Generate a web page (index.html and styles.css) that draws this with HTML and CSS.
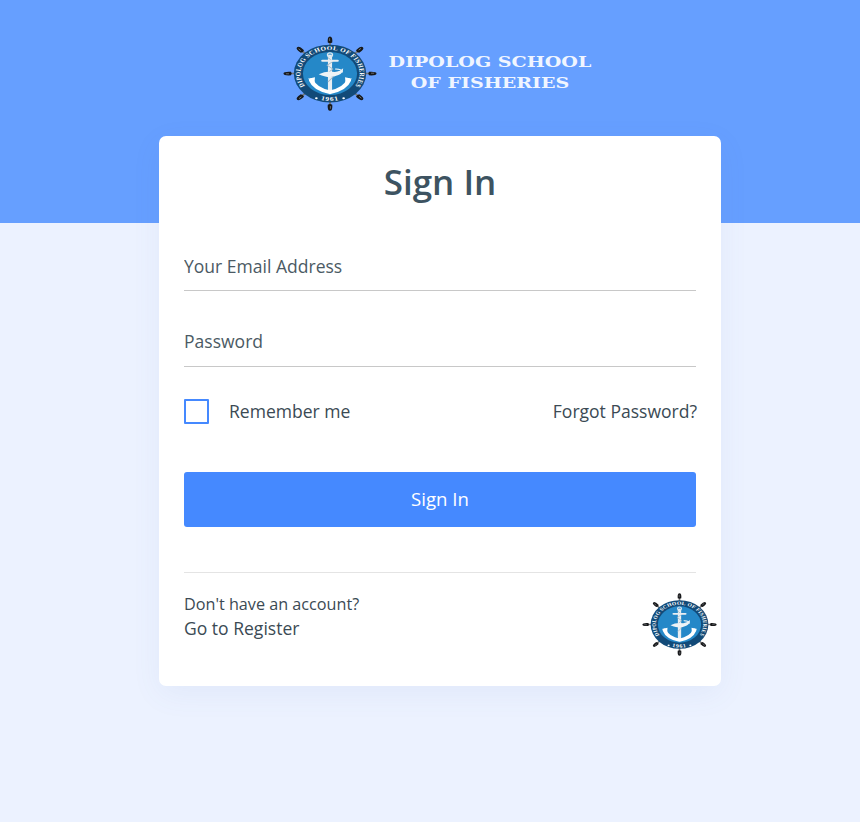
FILE: index.html
```html
<!DOCTYPE html>
<html lang="en">
<head>
<meta charset="utf-8">
<title>Sign In</title>
<link rel="stylesheet" href="styles.css">
</head>
<body>
<svg class="defs" aria-hidden="true">
  <defs>
    <path id="arc-top" d="M27.7 72.3 A31.5 31.5 0 1 1 72.3 72.3"/>
    <path id="arc-bottom" d="M24 76 A37 37 0 0 0 76 76"/>
    <g id="handle">
      <path d="M50 14 V6" stroke="#77797c" stroke-width="2.2"/>
      <path d="M47.6 8.5 Q47 .5 50 .5 Q53 .5 52.4 8.5 Q50 10 47.6 8.5Z" fill="#17181a"/>
      <path d="M49.6 3.5 V6" stroke="#8f9398" stroke-width=".8" stroke-linecap="round"/>
    </g>
    <symbol id="crest" viewBox="0 0 100 100" preserveAspectRatio="none">
      <use href="#handle"/>
      <use href="#handle" transform="rotate(45 50 50)"/>
      <use href="#handle" transform="rotate(90 50 50)"/>
      <use href="#handle" transform="rotate(135 50 50)"/>
      <use href="#handle" transform="rotate(180 50 50)"/>
      <use href="#handle" transform="rotate(225 50 50)"/>
      <use href="#handle" transform="rotate(270 50 50)"/>
      <use href="#handle" transform="rotate(315 50 50)"/>
      <circle cx="50" cy="50" r="38.5" fill="#124a78"/>
      <circle cx="50" cy="50" r="28.8" fill="#2588c8"/>
      <text class="crest-text"><textPath href="#arc-top" startOffset="50%" text-anchor="middle">DIPOLOG SCHOOL OF FISHERIES</textPath></text>
      <text class="crest-year"><textPath href="#arc-bottom" startOffset="50%" text-anchor="middle">1961</textPath></text>
      <circle cx="35.5" cy="83" r="1.4" fill="#fff"/>
      <circle cx="64.5" cy="83" r="1.4" fill="#fff"/>
      <g fill="none" stroke-linecap="round">
        <path d="M50 27 V72" stroke="#e9eef2" stroke-width="4.4"/>
        <path d="M48 29 L53 34 L47 39 L53 44 L47 50 L53 55 L48 61" stroke="#9fb6c6" stroke-width="1.1"/>
        <path d="M42 33 H58" stroke="#e9eef2" stroke-width="2.8"/>
        <circle cx="50" cy="25" r="2.6" stroke="#dbe7ef" stroke-width="1.6"/>
        <path d="M30 59 Q34 71 50 75 Q66 71 70 59" stroke="#fff" stroke-width="5"/>
        <path d="M56 44 Q63 44 63 48" stroke="#fff" stroke-width="1.4"/>
      </g>
      <path d="M26.5 57 L34 55 L33.5 63Z M73.5 57 L66 55 L66.5 63Z" fill="#fff"/>
      <path d="M38 51 Q46 46 55 48 Q61 47 64 43 Q64 50 59 52 Q52 56 45 54 Q41 53 38 51Z" fill="#eef3f6"/>
    </symbol>
  </defs>
</svg>

<header class="hero">
  <div class="brand">
    <svg class="crest crest-large" role="img" aria-label="Dipolog School of Fisheries crest"><use href="#crest"/></svg>
    <div class="brand-name"><span>DIPOLOG SCHOOL</span><span>OF FISHERIES</span></div>
  </div>
</header>

<main class="card">
  <h1 class="card-title">Sign In</h1>
  <form class="form">
    <input class="field field-email" type="email" placeholder="Your Email Address">
    <input class="field field-password" type="password" placeholder="Password">
    <div class="options">
      <label class="remember"><span class="checkbox"></span>Remember me</label>
      <a class="link" href="#">Forgot Password?</a>
    </div>
    <button class="submit" type="button">Sign In</button>
  </form>
  <footer class="card-footer">
    <div class="register">
      <p class="register-note">Don't have an account?</p>
      <a class="link" href="#">Go to Register</a>
    </div>
    <svg class="crest crest-small" role="img" aria-label="Dipolog School of Fisheries crest"><use href="#crest"/></svg>
  </footer>
</main>
</body>
</html>
```
FILE: styles.css
```css
* { box-sizing: border-box; }

html, body { margin: 0; height: 100%; }

body {
  background: #ecf2ff;
  font-family: "Open Sans", "Noto Sans", sans-serif;
  color: #3b4a54;
  overflow: hidden;
}

.defs { display: block; width: 0; height: 0; }

.hero {
  height: 223px;
  background: #669fff;
  padding: 36px 0 0 283px;
}

.brand {
  display: flex;
  align-items: flex-start;
  gap: 11px;
}

.crest { display: block; flex: none; }
.crest-large { width: 94px; height: 75px; }
.crest-small { width: 75px; height: 63px; margin-right: -21px; }

.crest-text { font: bold 7.6px "Liberation Serif", serif; fill: #fff; letter-spacing: .35px; }
.crest-year { font: bold 8px "Liberation Serif", serif; fill: #fff; letter-spacing: 1px; }

.brand-name {
  display: flex;
  flex-direction: column;
  align-items: center;
  width: 204px;
  padding-top: 16px;
  font-family: "DejaVu Serif", serif;
  font-weight: bold;
  font-size: 15px;
  line-height: 21px;
  white-space: nowrap;
  color: #fff;
  opacity: .9;
  transform: scaleX(1.27);
}

.card {
  width: 562px;
  height: 550px;
  margin: -87px 0 0 159px;
  padding: 21px 25px 0;
  background: #fff;
  border-radius: 7px;
  box-shadow: 0 8px 30px rgba(90, 120, 180, .07);
}

.card-title {
  margin: 0;
  text-align: center;
  font-size: 35px;
  line-height: 49px;
  font-weight: 600;
  color: #3d5361;
}

.form { display: flex; flex-direction: column; margin-top: 42px; }

.field {
  display: block;
  width: 100%;
  height: 43px;
  padding: 0 0 6px;
  border: 0;
  border-bottom: 1px solid #c8c8c8;
  border-radius: 0;
  outline: 0;
  background: transparent;
  font: 17.55px "Open Sans", "Noto Sans", sans-serif;
  color: #3b4a54;
}

.field::placeholder { color: #4b5a64; opacity: 1; }

.field-password { margin-top: 33px; padding-bottom: 8px; }

.options {
  display: flex;
  justify-content: space-between;
  align-items: center;
  margin-top: 31px;
  height: 26px;
  font-size: 17.55px;
}

.remember { display: flex; align-items: center; gap: 20px; }

.checkbox {
  width: 25px;
  height: 25px;
  border: 2px solid #4589ff;
  border-radius: 1px;
  background: #fff;
}

.link { color: #3b4a54; text-decoration: none; font-size: 17.55px; }
.options .link { margin-right: -1px; }

.submit {
  height: 55px;
  margin-top: 48px;
  padding: 0 0 2px;
  border: 0;
  border-radius: 3px;
  background: #4589ff;
  color: #fff;
  font: 18.6px "Open Sans", "Noto Sans", sans-serif;
}

.card-footer {
  display: flex;
  justify-content: space-between;
  align-items: flex-start;
  margin-top: 45px;
  padding-top: 20px;
  border-top: 1px solid #e4e4e4;
}

.register-note { margin: 0 0 1px; font-size: 16.2px; line-height: 22px; }
.register .link { display: block; line-height: 25px; }
```
